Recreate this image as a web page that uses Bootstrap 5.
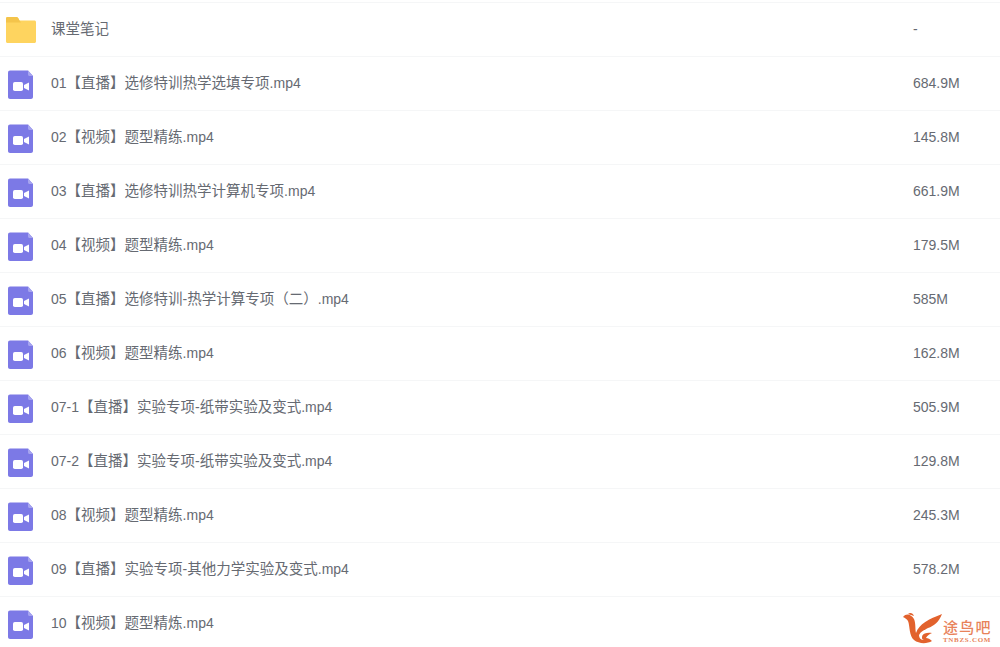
<!DOCTYPE html>
<html lang="zh-CN">

<head>
    <meta charset="UTF-8" />
    <meta name="viewport" content="width=device-width, initial-scale=1" />
    <title>课堂笔记</title>
    <link href="https://cdn.jsdelivr.net/npm/bootstrap@5.3.0/dist/css/bootstrap.min.css" rel="stylesheet" />
    <style>
        html, body {
            height: 647px;
            overflow: hidden;
        }

        body {
            background-color: #fff;
            padding-top: 2px;
            font-family: "Liberation Sans", "Noto Sans CJK SC", sans-serif;
            font-size: 14px;
            color: #666a72;
        }

        .file-list {
            border-top: 1px solid #f5f6f7;
        }

        .file-row {
            height: 54px;
            border-bottom: 1px solid #f5f6f7;
            padding-left: 5px;
        }

        .file-icon {
            width: 33px;
            flex-shrink: 0;
        }

        .file-name {
            margin-left: 13px;
            width: 862px;
            flex-shrink: 0;
        }

        .cjk-run {
            font-size: 14.5px;
        }

        .watermark {
            position: absolute;
            left: 901px;
            top: 611px;
            width: 98px;
            height: 36px;
            background: #fff;
        }

        .watermark-cn {
            position: absolute;
            left: 42px;
            top: 9px;
            font-size: 15px;
            line-height: 15px;
            letter-spacing: 1.2px;
            font-weight: 500;
            color: #e8825a;
            font-family: "Liberation Sans", "Noto Sans CJK SC", sans-serif;
        }

        .watermark-en {
            position: absolute;
            left: 42px;
            top: 26px;
            font-size: 7px;
            line-height: 7px;
            letter-spacing: .7px;
            font-weight: 700;
            color: #e8825a;
            font-family: "Liberation Serif", serif;
        }
    </style>
</head>

<body>

    <div class="file-list" id="fileList"></div>

    <!-- 水印 -->
    <div class="watermark">
        <svg width="42" height="34" viewBox="0 0 42 34">
            <path d="M2 6 C5 2 10 3 13 8 C15 13 14 18 15 22 C18 13 28 8 41 3 C38 11 33 15 27 17 C23 19 20 22 20 25 C23 22 27 21 31 22 C28 23 26 25 25 27 C27 27 29 28 31 30 C26 33 18 33 13 29 C8 25 9 15 7 10 C6 8 4 7 2 6 Z" fill="#e2622d" />
            <path d="M7 3 C9 1 12 2 13 5 C11 4 9 4 7 3 Z" fill="#e2622d" />
            <path d="M18 24 C20 20 24 18 27 19 C24 20 21 23 21 27 C21 28 22 29 23 29 C20 29 18 27 18 24 Z" fill="#fff" />
        </svg>
        <span class="watermark-cn">途鸟吧</span>
        <span class="watermark-en">TNBZS.COM</span>
    </div>

    <template id="folderIcon">
        <svg width="33" height="28" viewBox="0 0 33 28">
            <path d="M1 2.5 C1 1.7 1.7 1 2.5 1 H11 C12 1 12.8 1.5 13.3 2.3 L14.5 4.5 H29.5 C30.3 4.5 31 5.2 31 6 V25.5 C31 26.3 30.3 27 29.5 27 H2.5 C1.7 27 1 26.3 1 25.5 Z" fill="#fed45f" />
            <path d="M1 6.5 H16 L14.5 4.5 L13.3 2.3 C12.8 1.5 12 1 11 1 H2.5 C1.7 1 1 1.7 1 2.5 Z" fill="#f4c44b" />
        </svg>
    </template>

    <template id="videoIcon">
        <svg width="33" height="30" viewBox="0 -1 33 30">
            <path d="M5 0.5 H23 L28 6 V27 C28 28.1 27.1 29 26 29 H5 C3.9 29 3 28.1 3 27 V2.5 C3 1.4 3.9 0.5 5 0.5 Z" fill="#7c79e6" />
            <path d="M23 0.5 L28 6 H24.5 C23.7 6 23 5.3 23 4.5 Z" fill="#a6a4ef" />
            <rect x="8" y="12" width="10" height="9" rx="1.8" fill="#fff" />
            <path d="M19 15 L24 12.5 V20.5 L19 18 Z" fill="#fff" />
        </svg>
    </template>

    <script src="https://cdn.jsdelivr.net/npm/bootstrap@5.3.0/dist/js/bootstrap.bundle.min.js"></script>

    <script>
        const files = [
            ['课堂笔记', '-', 'folderIcon'],
            ['01【直播】选修特训热学选填专项.mp4', '684.9M', 'videoIcon'],
            ['02【视频】题型精练.mp4', '145.8M', 'videoIcon'],
            ['03【直播】选修特训热学计算机专项.mp4', '661.9M', 'videoIcon'],
            ['04【视频】题型精练.mp4', '179.5M', 'videoIcon'],
            ['05【直播】选修特训-热学计算专项（二）.mp4', '585M', 'videoIcon'],
            ['06【视频】题型精练.mp4', '162.8M', 'videoIcon'],
            ['07-1【直播】实验专项-纸带实验及变式.mp4', '505.9M', 'videoIcon'],
            ['07-2【直播】实验专项-纸带实验及变式.mp4', '129.8M', 'videoIcon'],
            ['08【视频】题型精练.mp4', '245.3M', 'videoIcon'],
            ['09【直播】实验专项-其他力学实验及变式.mp4', '578.2M', 'videoIcon'],
            ['10【视频】题型精炼.mp4', '', 'videoIcon']
        ];

        const fileList = document.getElementById('fileList');

        files.forEach(file => {
            const row = document.createElement('div');
            row.classList.add('file-row', 'd-flex', 'align-items-center');

            const icon = document.createElement('div');
            icon.classList.add('file-icon', 'd-flex');
            icon.appendChild(document.getElementById(file[2]).content.cloneNode(true));

            const name = document.createElement('div');
            name.classList.add('file-name');

            // The Chinese parts run a little wider than the Latin ones
            file[0].split(/([^\x00-\x7f]+)/).forEach(part => {
                if (part === '') return;
                const span = document.createElement('span');
                if (/[^\x00-\x7f]/.test(part)) span.classList.add('cjk-run');
                span.textContent = part;
                name.appendChild(span);
            });

            const size = document.createElement('div');
            size.textContent = file[1];

            row.appendChild(icon);
            row.appendChild(name);
            row.appendChild(size);
            fileList.appendChild(row);
        });
    </script>

</body>

</html>
